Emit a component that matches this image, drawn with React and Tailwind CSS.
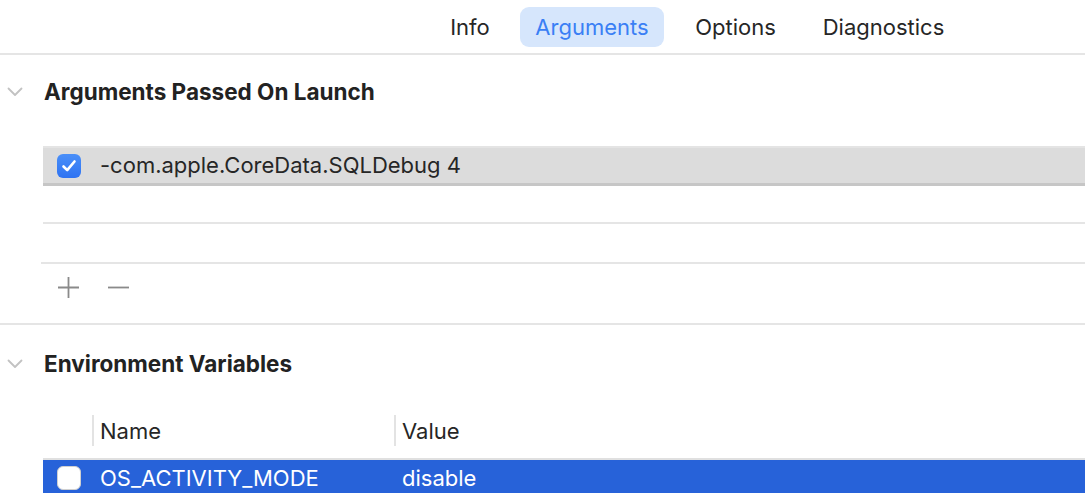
import React from 'react';

const tabs = [
    { label: 'Info', w: 'w-[68px]' },
    { label: 'Arguments', w: 'w-[144px]', active: true },
    { label: 'Options', w: 'w-[111px]' },
    { label: 'Diagnostics', w: 'w-[153px]' },
];

function Chevron() {
    return (
        <svg width="16" height="10" viewBox="0 0 16 10" className="shrink-0">
            <path d="M1.5 1.5 L8 8 L14.5 1.5" fill="none" stroke="#c2c2c2" strokeWidth="1.8" strokeLinecap="round" strokeLinejoin="round" />
        </svg>
    );
}

function SectionTitle({ children, h }) {
    return (
        <div className={`flex items-center ${h}`}>
            <div className="w-[44px] pl-[7px] flex items-center">
                <Chevron />
            </div>
            <span className="text-[22.5px] font-bold text-[#222222]">{children}</span>
        </div>
    );
}

function Checkbox({ checked }) {
    if (checked) {
        return (
            <div className="w-[24px] h-[24px] rounded-[6px] bg-gradient-to-b from-[#4a8ff8] to-[#2f73f2] flex items-center justify-center shrink-0">
                <svg width="16" height="14" viewBox="0 0 16 14">
                    <path d="M2.5 7.5 L6.2 11.2 L13.5 2.5" fill="none" stroke="white" strokeWidth="2.6" strokeLinecap="round" strokeLinejoin="round" />
                </svg>
            </div>
        );
    }
    return <div className="w-[24px] h-[24px] rounded-[6px] bg-white border border-[#d0d0d0] shrink-0" />;
}

export default function App() {
    return (
        <div className="w-[1085px] h-[493px] overflow-hidden bg-white text-[#262626]" style={{ fontFamily: 'Inter, "Liberation Sans", sans-serif' }}>
            {/* tab bar */}
            <div className="h-[53px] flex items-center pl-[436px] gap-4">
                {tabs.map((t) => (
                    <div
                        key={t.label}
                        className={`${t.w} h-[40px] mt-[1px] rounded-[9px] flex items-center justify-center text-[22px] ${t.active ? 'bg-[#d6e6fc] text-[#3a7ff5]' : 'text-[#262626]'}`}
                    >
                        {t.label}
                    </div>
                ))}
            </div>
            <div className="h-[2px] bg-[#e5e5e5]" />

            {/* arguments */}
            <SectionTitle h="h-[74px]">Arguments Passed On Launch</SectionTitle>
            <div className="mt-[17px] ml-[43px]">
                <div className="h-[2px] bg-[#e4e4e4]" />
                <div className="h-[35px] bg-[#dcdcdc] flex items-center pl-[14px]">
                    <Checkbox checked />
                    <span className="ml-[19px] text-[22px] text-[#262626]">-com.apple.CoreData.SQLDebug 4</span>
                </div>
                <div className="h-[3px] bg-[#c6c6c6]" />
                <div className="h-[36px]" />
                <div className="h-[2px] bg-[#e5e5e5]" />
                <div className="h-[38px]" />
            </div>
            <div className="ml-[41px] h-[2px] bg-[#e5e5e5]" />
            <div className="h-[59px] flex items-start pt-[13px] pl-[58px] gap-[29px]">
                <svg width="21" height="21" viewBox="0 0 21 21">
                    <path d="M10.5 0 V21 M0 10.5 H21" stroke="#8a8a8a" strokeWidth="1.8" />
                </svg>
                <svg width="21" height="21" viewBox="0 0 21 21">
                    <path d="M0 10.5 H21" stroke="#8a8a8a" strokeWidth="1.8" />
                </svg>
            </div>
            <div className="h-[2px] bg-[#e5e5e5]" />

            {/* environment */}
            <SectionTitle h="h-[78px]">Environment Variables</SectionTitle>
            <div className="ml-[43px]">
                <div className="h-[55px] flex items-center">
                    <div className="w-[49px]" />
                    <div className="w-[302px] flex items-center">
                        <div className="w-[2px] h-[31px] bg-[#e3e3e3]" />
                        <span className="ml-[6px] text-[22px] text-[#262626] pt-[2px]">Name</span>
                    </div>
                    <div className="flex items-center">
                        <div className="w-[2px] h-[31px] bg-[#e3e3e3]" />
                        <span className="ml-[6px] text-[22px] text-[#262626] pt-[2px]">Value</span>
                    </div>
                </div>
                <div className="h-[2px] bg-[#e0e0e0]" />
                <div className="h-[36px] bg-[#2762d9] flex items-center text-white text-[22px]">
                    <div className="w-[49px] pl-[14px]">
                        <Checkbox />
                    </div>
                    <div className="w-[302px] pl-[8px]">OS_ACTIVITY_MODE</div>
                    <div className="pl-[8px]">disable</div>
                </div>
            </div>
        </div>
    );
}
